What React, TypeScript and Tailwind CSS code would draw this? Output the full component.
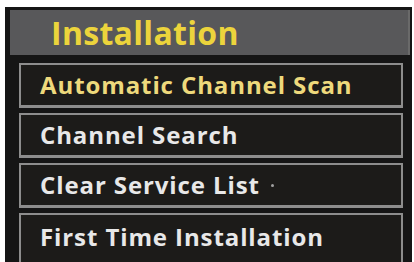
import React from 'react';

const items = [
    { label: 'Automatic Channel Scan', active: true },
    { label: 'Channel Search' },
    { label: 'Clear Service List', dot: true },
    { label: 'First Time Installation', last: true },
];

export default function App() {
    return (
        <div className="w-[414px] h-[262px] bg-white overflow-hidden pt-[7px] pl-[5px] pr-[2px]" style={{ fontFamily: '"Open Sans", "DejaVu Sans", sans-serif' }}>
            <div className="h-full bg-[#151515] pt-[3px] pl-[5px] pr-[2px] flex flex-col overflow-hidden">
                {/* title bar */}
                <div className="h-[45px] shrink-0 bg-[#58585a] flex items-center pl-[41px] border-r-2 border-[#6a6a6a]">
                    <span className="text-[32px] font-bold text-[#ecd43c] leading-none tracking-[0.3px]">Installation</span>
                </div>

                {/* menu entries */}
                <div className="flex flex-col gap-[5px] mt-[8px] pl-[9px] pr-[7px]">
                    {items.map((it) => (
                        <div
                            key={it.label}
                            className={`${it.last ? 'h-[54px] items-start pt-[10px]' : 'h-[45px] items-center'} shrink-0 bg-[#1c1b19] border-2 border-b-[3px] border-[#8d8d8d] flex pl-[19px]`}
                        >
                            <span className={`text-[24px] font-bold leading-none tracking-[0.9px] ${it.active ? 'text-[#eed97c]' : 'text-[#e8e8e8]'}`}>
                                {it.label}
                            </span>
                            {it.dot && <span className="ml-[11px] w-[3px] h-[3px] rounded-full bg-[#a0a0a0] self-center" />}
                        </div>
                    ))}
                </div>
            </div>
        </div>
    );
}
